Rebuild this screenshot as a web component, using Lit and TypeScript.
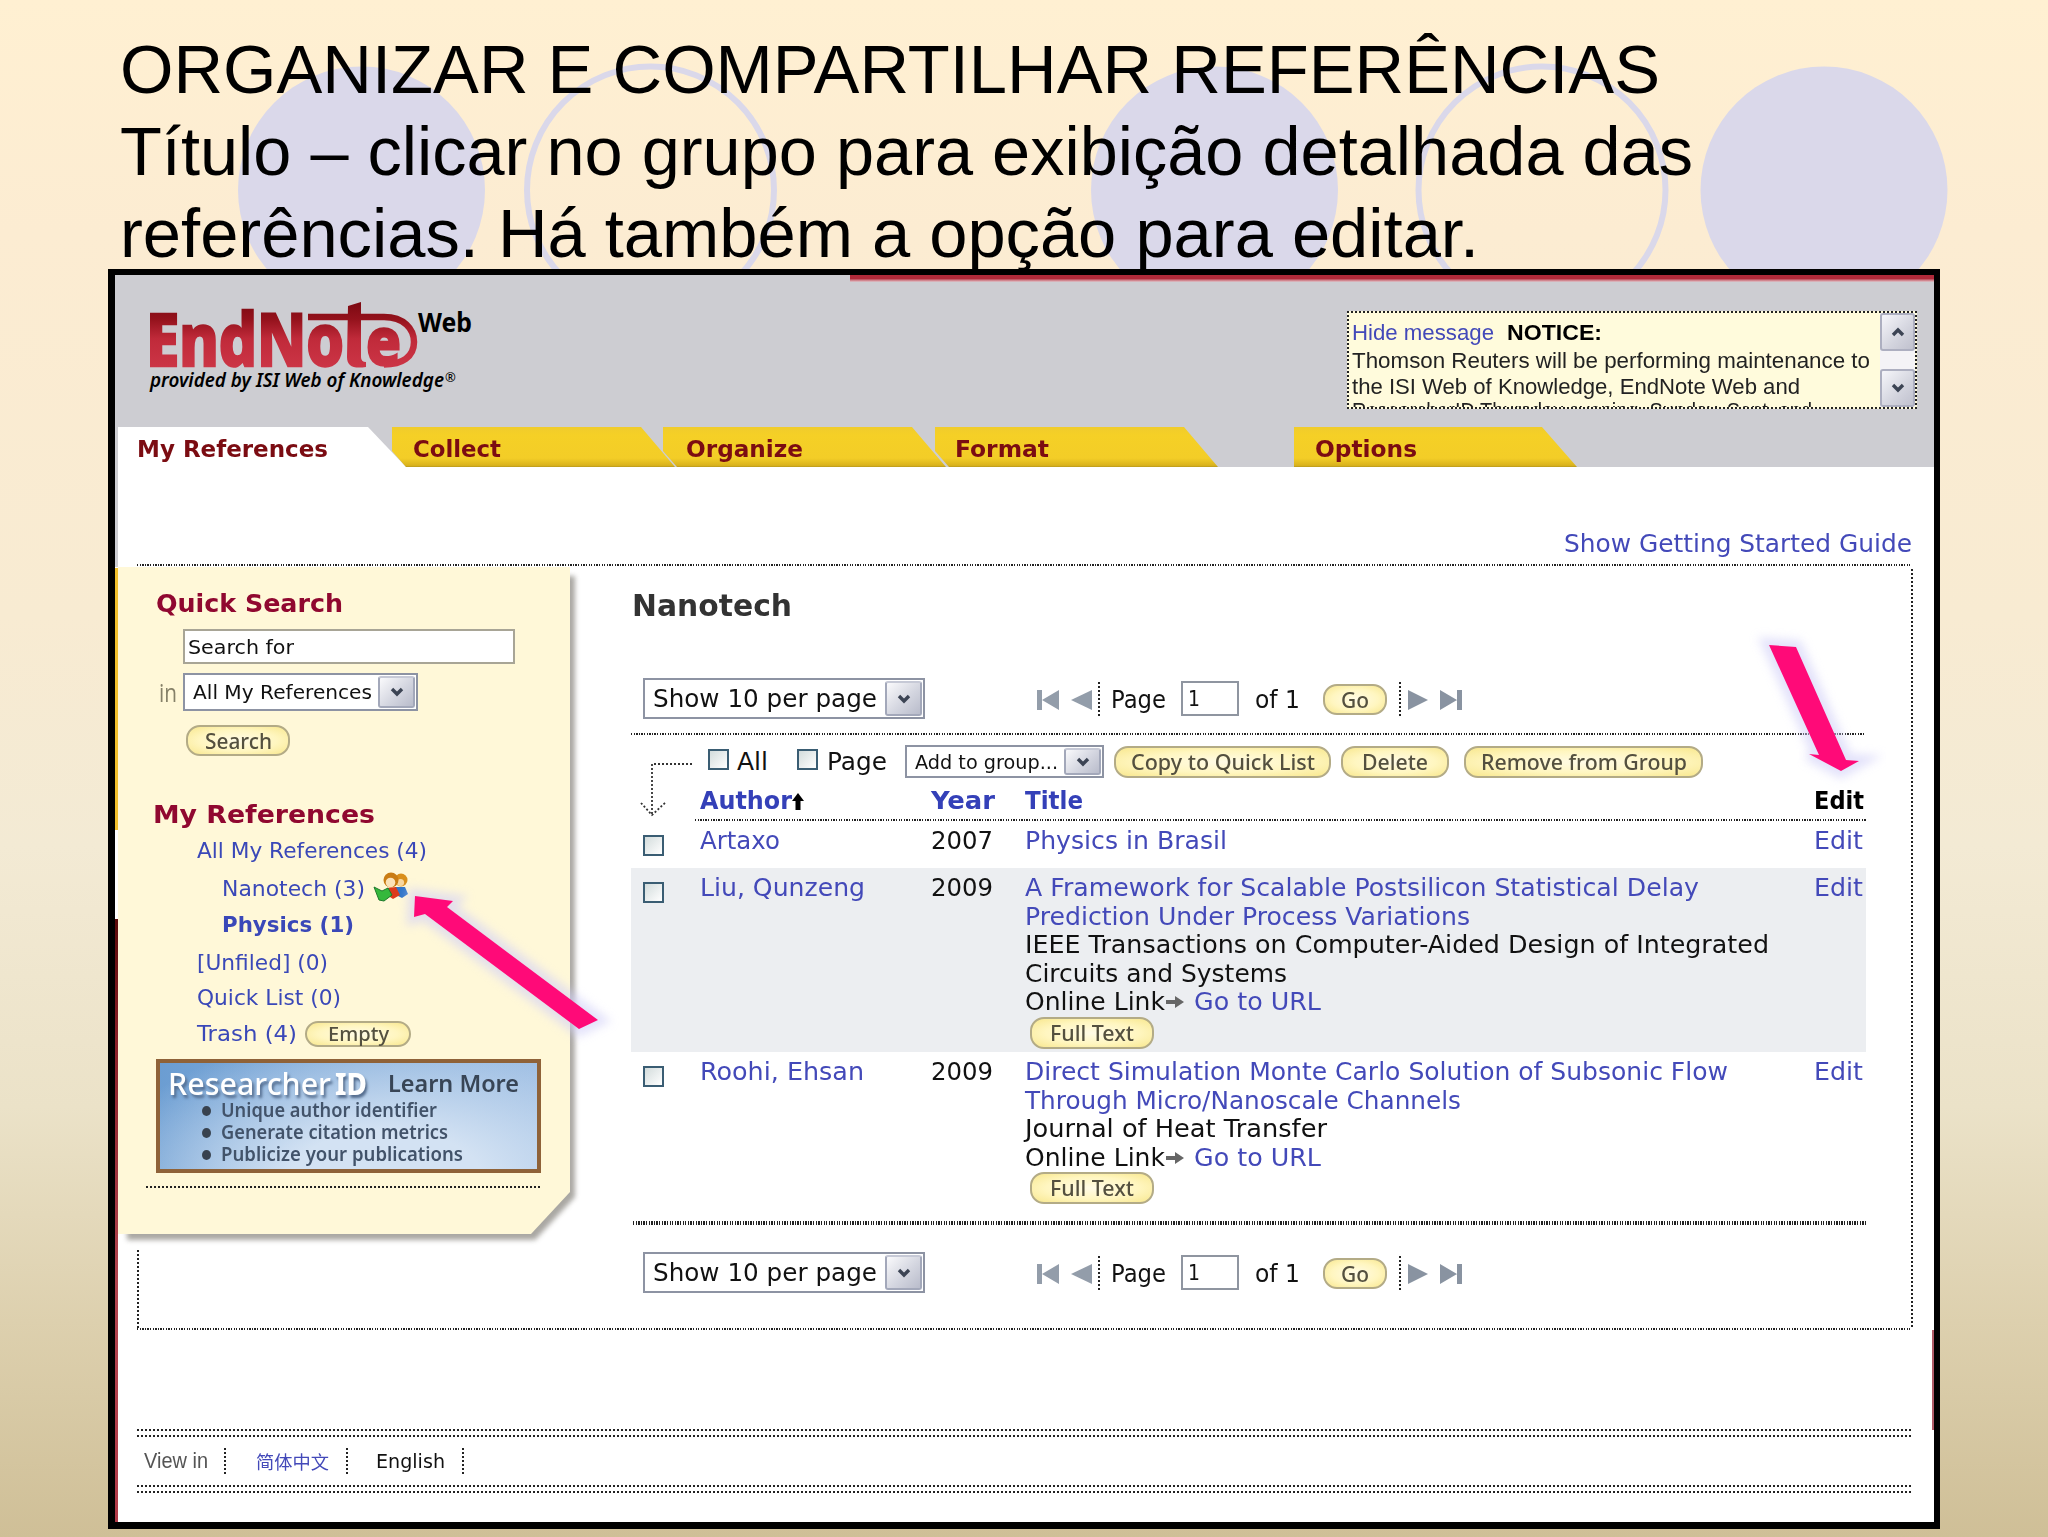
import { LitElement, html, svg, css, nothing } from "lit";
import { customElement, property, query } from "lit/decorators.js";

/** One line of text scaled horizontally to occupy exactly `w` pixels. */
@customElement("fit-text")
class FitText extends LitElement {
  static styles = css`
    :host { display: inline-block; flex: none; white-space: nowrap; text-align: left; }
    .t { display: inline-block; transform-origin: 0 50%; white-space: pre; }
  `;
  @property({ type: Number }) w = 0;
  @property() text = "";
  @query(".t") t!: HTMLElement;
  render() { return html`<span class="t">${this.text}</span>`; }
  updated() {
    this.t.style.transform = "none";
    const natural = this.t.getBoundingClientRect().width;
    this.style.width = `${this.w}px`;
    if (natural > 0) this.t.style.transform = `scaleX(${this.w / natural})`;
  }
}

const fit = (text: string, w: number, cls = "") =>
  html`<fit-text class=${cls} .text=${text} .w=${w}></fit-text>`;

@customElement("pill-button")
class PillButton extends LitElement {
  static styles = css`
    :host { display: flex; flex: none; box-sizing: border-box; align-items: center; justify-content: center;
      border: 2px solid #b3ab86; border-radius: 14px; color: #54503f;
      background: radial-gradient(ellipse at 50% 50%, #fffbe6 0%, #fff6c0 55%, #f8e78e 100%);
      font: 500 21px/26px "Noto Sans", sans-serif; }
  `;
  @property() label = "";
  @property({ type: Number }) w = 0;
  render() { return fit(this.label, this.w); }
}

const chevron = (up = false) => html`<svg width="16" height="12" viewBox="0 0 16 12">
  <path d=${up ? "M3 9 8 4l5 5" : "M3 3 8 8l5-5"} fill="none" stroke="#3c4454" stroke-width="3.400"/></svg>`;

@customElement("select-box")
class SelectBox extends LitElement {
  static styles = css`
    :host { display: flex; flex: none; box-sizing: border-box; justify-content: space-between; align-items: stretch;
      border: 2px solid #8d93a3; background: #fff; color: #111; padding: 1px; }
    .label { align-self: center; margin-left: 7px; }
    .btn { width: 37px; box-sizing: border-box; display: flex; align-items: center; justify-content: center;
      border: 2px solid #a3a8ba; border-top-color: #c6c9d6; border-radius: 3px;
      background: linear-gradient(135deg, #fafafc, #d4d6e0 55%, #b9bccb); }
  `;
  @property() label = "";
  @property({ type: Number }) w = 0;
  render() { return html`${fit(this.label, this.w, "label")}<span class="btn">${chevron()}</span>`; }
}

@customElement("page-nav")
class PageNav extends LitElement {
  static styles = css`
    :host { display: flex; height: 41px; align-items: center; padding-left: 12px;
      font: 24px/30px "DejaVu Sans", sans-serif; color: #111; }
    select-box { width: 282px; height: 41px; font-size: 25px; line-height: 32px; }
    .first { margin-left: 112px; } .prev { margin-left: 11px; }
    .sep { width: 2px; height: 34px; background: repeating-linear-gradient(#222 0 2px, #fff 2px 4px); }
    .s1 { margin-left: 6px; } .s2 { margin-left: 12px; }
    .page { margin-left: 11px; }
    .num { margin-left: 15px; width: 58px; height: 35px; box-sizing: border-box; border: 2px solid #8f95a0;
      padding-left: 5px; font-size: 21px; line-height: 33px; background: #fff; }
    .of { margin-left: 16px; }
    pill-button { margin-left: 23px; width: 64px; height: 31px; margin-top: 2px; }
    .next { margin-left: 7px; } .last { margin-left: 12px; }
    svg { flex: none; margin-top: 2px; }
    .page, .of { position: relative; top: 1px; }
  `;
  render() {
    return html`
      <select-box label="Show 10 per page" .w=${224}></select-box>
      <svg class="first" width="23" height="20"><path d="M0 0h5v20H0zM22 0v20L5 10z" fill="#939daa"/></svg>
      <svg class="prev" width="21" height="20"><path d="M21 0v20L0 10z" fill="#939daa"/></svg>
      <span class="sep s1"></span>
      ${fit("Page", 55, "page")}
      <span class="num">${fit("1", 12)}</span>
      ${fit("of 1", 45, "of")}
      <pill-button label="Go" .w=${28}></pill-button>
      <span class="sep s2"></span>
      <svg class="next" width="20" height="20"><path d="M0 0v20l20-10z" fill="#8993a1"/></svg>
      <svg class="last" width="22" height="20"><path d="M0 0v20l17-10zM17 0h5v20h-5z" fill="#8993a1"/></svg>`;
  }
}

interface Ref {
  author: [string, number]; year: string; title: [string, number][]; journal: [string, number][];
  link: boolean; size: string;
}
const REFS: Ref[] = [
  { author: ["Artaxo", 80], year: "2007", title: [["Physics in Brasil", 202]], journal: [], link: false, size: "r1" },
  { author: ["Liu, Qunzeng", 165], year: "2009",
    title: [["A Framework for Scalable Postsilicon Statistical Delay", 674], ["Prediction Under Process Variations", 445]],
    journal: [["IEEE Transactions on Computer-Aided Design of Integrated", 744], ["Circuits and Systems", 262]],
    link: true, size: "r2" },
  { author: ["Roohi, Ehsan", 164], year: "2009",
    title: [["Direct Simulation Monte Carlo Solution of Subsonic Flow", 703], ["Through Micro/Nanoscale Channels", 436]],
    journal: [["Journal of Heat Transfer", 302]], link: true, size: "r3" },
];

const TABS: [string, string, number][] = [
  ["My References", "t0", 191], ["Collect", "t1", 88], ["Organize", "t2", 117], ["Format", "t3", 94], ["Options", "t4", 102],
];

const circles = svg`
  <g fill="#dad8ea"><circle cx="361.500" cy="190" r="123.500"/><circle cx="1214.500" cy="190" r="123.500"/><circle cx="1824" cy="190" r="123.500"/></g>
  <g fill="none" stroke="#dad8ea" stroke-width="6"><circle cx="650.500" cy="190" r="123.500"/><circle cx="1542" cy="190" r="123.500"/></g>`;

@customElement("app-root")
class AppRoot extends LitElement {
  static styles = css`
    :host { display: block; font-family: "DejaVu Sans", sans-serif; }
    * { box-sizing: border-box; }
    .slide { position: relative; width: 2048px; height: 1537px; overflow: hidden;
      background: linear-gradient(#fff0d2 0%, #fcecd2 15%, #f8ebd2 40%, #f3ead4 55%, #ebe2c8 72%, #ddd0ae 86%, #cfbf97 100%); }
    .circles { position: absolute; left: 0; top: 0; }
    .heading { position: relative; height: 269px; padding: 28px 0 0 120px;
      display: flex; flex-direction: column; align-items: flex-start;
      font: 68.300px/82px "Liberation Sans", Arial, sans-serif; color: #000; }
    .frame { position: relative; margin-left: 108px; width: 1832px; height: 1260px; background: #fff;
      border: solid #000; border-width: 6px 6px 7px 7px; display: flex; flex-direction: column; }
    .head { position: relative; height: 192px; background: #cdcdd2; }
    .red { position: absolute; left: 735px; right: 0; top: 0; height: 7px; background: linear-gradient(#b02a3a 0 50%, #cf7b85 75%, #dcc5cb); }
    .banner { height: 152px; display: flex; justify-content: space-between; align-items: flex-start; }
    .logo { display: block; }
    .tabs { display: flex; padding-left: 3px; height: 40px; }
    .tab { height: 40px; font-weight: 700; font-size: 22.500px; line-height: 45px; color: #7b0c12;
      background: linear-gradient(#f0cc2c, #f5d026 20%, #f3cd27 78%, #d9b21c 96%, #b8981d); }
    .t0 { width: 288px; padding-left: 19px; background: #fff; clip-path: polygon(0 0, 250px 0, 288px 100%, 0 100%); }
    .t1, .t2, .t3 { clip-path: polygon(0 0, 249px 0, 283px 100%, 14px 100%, 0 24px); }
    .t1 { width: 283px; margin-left: -14px; padding-left: 21px; }
    .t2 { width: 284px; margin-left: -12px; padding-left: 23px; }
    .t3 { width: 284px; margin-left: -12px; padding-left: 20px; }
    .t4 { width: 283px; margin-left: 75px; padding-left: 21px; clip-path: polygon(0 0, 248px 0, 100% 100%, 0 100%); }

    .notice { margin: 36px 17px 0 0; width: 570px; height: 98px; border: 2px dotted #222; background: #fffbdc;
      display: flex; justify-content: space-between; overflow: hidden;
      font: 22px/26px "Liberation Sans", Arial, sans-serif; color: #222; }
    .msg { padding: 5px 0 0 3px; height: 94px; overflow: hidden; display: flex; flex-direction: column; }
    .msg .row { display: flex; gap: 13px; height: 30px; line-height: 29px; flex: none; }
    .msg .cut { margin-top: -2px; }
    .bold { font-weight: 700; color: #000; }
    .scroll { width: 35px; display: flex; flex-direction: column; justify-content: space-between; background: #f4f3f6; }
    .sb { height: 38px; display: flex; align-items: center; justify-content: center; border: 2px solid #adafc0; border-radius: 3px;
      background: linear-gradient(135deg, #f6f6fa, #d3d4de 60%, #c0c1ce); }
    .link { color: #4349b9; }

    .guide { height: 97px; padding: 62px 22px 0 0; display: flex; justify-content: flex-end; font-size: 25px; line-height: 30px; }
    .dots { height: 2px; background: repeating-linear-gradient(90deg, #222 0 1.300px, #fff 1.300px 2.610px); }
    .wide { background: repeating-linear-gradient(90deg, #222 0 2px, transparent 2px 4px); }
    .edge { margin: 0 22px; flex: none; }
    .content { position: relative; height: 762px; display: flex; flex: none; }
    .vr { position: absolute; width: 2px; background: repeating-linear-gradient(#222 0 2px, #fff 2px 4px); }
    .vright { left: 1796px; top: 3px; bottom: 0; } .vleft { left: 22px; top: 684px; bottom: 0; }

    .side { position: relative; width: 455px; flex: none; }
    .sidebg { position: absolute; left: 0; top: 0; }
    .sidecol { position: relative; display: flex; flex-direction: column; align-items: flex-start; }
    h2 { margin: 23px 0 0 41px; font-size: 25px; line-height: 30px; height: 30px; color: #900830; display: flex; }
    .search { margin: 10px 0 0 68px; width: 332px; height: 35px; border: 2px solid #a8a596; background: #fff; padding-left: 3px;
      font-size: 19.500px; line-height: 33px; color: #111; display: flex; }
    .inrow { margin: 9px 0 0 44px; display: flex; height: 38px; align-items: center; font: 25px/30px "Open Sans", sans-serif; color: #858068; }
    .inrow select-box { margin-left: 6px; width: 235px; height: 38px; font: 20px/26px "DejaVu Sans", sans-serif; }
    .bsearch { margin: 14px 0 0 71px; width: 104px; height: 31px; }
    .mine { margin: 44px 0 0 38px; }
    .tree { margin: 7px 0 0 82px; display: grid; grid-template-rows: 38px 36px 37.500px 35.500px 35.500px 28px; font-size: 21px; line-height: 28px; color: #3a48b8; }
    .tree div { display: flex; }
    .sub { padding-left: 25px; }
    .pbold { font-weight: 700; }
    .people { margin: -3px 0 0 8px; }
    .bempty { margin: 1px 0 0 8px; width: 106px; height: 26px; font-size: 20px; }
    .rid { margin: 11px 0 0 41px; width: 385px; height: 114px; border: 4px solid #8f6238; padding: 2px 0 0 8px;
      background: radial-gradient(ellipse at 60% 110%, #d3e2f3 30%, transparent 90%), linear-gradient(100deg, #6b9dd2, #9fbfe4);
      font-family: "Noto Sans", sans-serif; color: #42536a; font-weight: 600; }
    .ridtop { display: flex; height: 36px; align-items: center; line-height: 36px; }
    .brand { font-size: 31px; font-weight: 500; color: #fff; text-shadow: 2px 3px 3px #51698a; }
    .id { font-size: 31px; font-weight: 800; color: #fff; margin-left: 4px; text-shadow: 2px 3px 3px #51698a; }
    .learn { font-size: 24px; margin-left: 21px; color: #384556; }
    .rid ul { list-style: none; margin: -1px 0 0; padding: 0 0 0 34px; font-size: 20px; line-height: 22px; }
    .rid li { display: flex; align-items: center; gap: 10px; height: 21.800px; }
    .rid li::before { content: ""; width: 9px; height: 10px; border-radius: 50%; background: #38424f; margin-top: 2px; }
    .sdots { margin: 13px 0 0 31px; width: 395px; }

    .main { margin-left: 61px; width: 1235px; display: flex; flex-direction: column; position: relative; font-size: 25px; }
    h1 { margin: 21px 0 0 1px; font-size: 31px; line-height: 36px; height: 36px; color: #333; display: flex; }
    .p1 { margin-top: 55px; } .d1 { margin-top: 14px; }
    .elbow { position: absolute; left: 8px; top: 196px; }
    .tools { margin-top: 10px; height: 33px; display: flex; align-items: center; padding-left: 77px; line-height: 28px; color: #111; }
    .check { flex: none; width: 21px; height: 21px; border: 2px solid #3a5d73; background: linear-gradient(135deg, #d3dcdc, #fff); margin-top: -4px; }
    .la { margin-left: 8px; } .c2 { margin-left: 29px; } .lp { margin-left: 9px; }
    .tools select-box { margin-left: 18px; width: 199px; height: 33px; font-size: 20px; }
    .b1 { margin-left: 10px; width: 217px; height: 32px; } .b2 { margin-left: 10px; width: 108px; height: 32px; } .b3 { margin-left: 15px; width: 239px; height: 32px; }
    .cols { display: grid; grid-template-columns: 68.500px 231px 94.500px 789px 52px; }
    .hdr { margin-top: 8px; height: 30px; line-height: 30px; font-weight: 700; color: #3440b8; }
    .hdr > span { display: flex; }
    .hdr svg { margin: 7px 0 0 0; }
    .black { color: #000; }
    .d2 { margin: 3px 0 0 64px; }
    .rec { padding-top: 6px; line-height: 28.600px; color: #111; }
    .r1 { height: 47px; } .r2 { height: 184px; background: #eceef1; } .r3 { height: 169px; }
    .rec .check { margin: 8px 0 0 12px; }
    .stack { display: flex; flex-direction: column; align-items: flex-start; }
    .stack > * { flex: none; }
    .online { display: flex; }
    .online svg { margin: 7px 10px 0 1px; }
    .full { margin: 0 0 0 5px; width: 124px; height: 32px; }
    .d3 { height: 4px; margin: 0 0 0 2px; }
    .p2 { margin-top: 27px; }
    .foot1 { margin-top: 99px; } .gap { margin-top: 4px; }
    .lang { height: 48px; flex: none; display: flex; align-items: center; padding-left: 29px; font: 21.500px/48px "Liberation Sans", Arial, sans-serif; color: #555; }
    .lang i { width: 2px; height: 26px; background: repeating-linear-gradient(#222 0 2px, #fff 2px 4px); }
    .zh { font-family: "Noto Sans CJK SC", sans-serif; font-size: 18.500px; margin: 0 17px 0 30px; }
    .en { font-family: "DejaVu Sans", sans-serif; font-size: 20px; color: #111; margin: 0 17px 0 28px; }
    .i1 { margin-left: 16px; }
    .strip { position: absolute; left: 0; width: 3px; }
    .grey { top: 152px; height: 140px; background: #cdcdd2; }
    .gold { top: 293px; height: 262px; background: #f2c02c; }
    .wine { top: 644px; bottom: 0; background: linear-gradient(#5a0a0a, #8a2028 20%, #b0444f 60%, #b03a48); }
    .rwine { left: auto; right: 0; top: 1055px; height: 100px; background: #b05a66; width: 2px; }
    .arrows { position: absolute; left: 0; top: 0; }
  `;

  render() {
    return html`
    <div class="slide">
      <svg class="circles" width="2048" height="330">${circles}</svg>
      <div class="heading">
        ${fit("ORGANIZAR E COMPARTILHAR REFERÊNCIAS", 1540)}
        ${fit("Título – clicar no grupo para exibição detalhada das", 1573)}
        ${fit("referências. Há também a opção para editar.", 1359)}
      </div>
      <div class="frame">
        <div class="head">
          <div class="red"></div>
          <div class="banner">${this.logo()}${this.notice()}</div>
          <div class="tabs">${TABS.map(([n, c, w]) => html`<div class="tab ${c}">${fit(n, w)}</div>`)}</div>
        </div>
        <div class="guide link">${fit("Show Getting Started Guide", 348)}</div>
        <div class="dots edge"></div>
        <div class="content">
          ${this.sidebar()}${this.main()}
          <div class="vr vleft"></div><div class="vr vright"></div>
        </div>
        <div class="dots edge"></div>
        <div class="dots wide edge foot1"></div><div class="dots wide edge gap"></div>
        <div class="lang">
          ${fit("View in", 64)}<i class="i1"></i>
          ${fit("简体中文", 73, "zh link")}<i></i>
          ${fit("English", 69, "en")}<i></i>
        </div>
        <div class="dots wide edge"></div><div class="dots wide edge gap"></div>
        <div class="strip grey"></div><div class="strip gold"></div><div class="strip wine"></div><div class="strip rwine"></div>
      </div>
      <svg class="arrows" width="2048" height="1100">
        <defs><filter id="glow" x="-30%" y="-30%" width="160%" height="160%"><feGaussianBlur stdDeviation="5"/></filter></defs>
        ${["415,896 453,901 447,907 598,1020 579,1029 425,914 414,917",
           "1769,645 1796,647 1846,760 1859,761 1841,771 1809,754 1819,755"].map(p => svg`
          <polygon points=${p} fill="#c9c6f4" stroke="#d2d0f8" stroke-width="14" opacity=".6" filter="url(#glow)"/>
          <polygon points=${p} fill="#ff0a78"/>`)}
      </svg>
    </div>`;
  }

  logo() {
    return html`<svg class="logo" width="370" height="152" viewBox="115 275 370 152">
      <defs><linearGradient id="lg" gradientUnits="userSpaceOnUse" x1="0" y1="303" x2="0" y2="368">
        <stop offset="0" stop-color="#7d0a12"/><stop offset=".25" stop-color="#94121c"/><stop offset=".55" stop-color="#c02a3a"/><stop offset="1" stop-color="#cc3546"/></linearGradient></defs>
      <g fill="url(#lg)" stroke="url(#lg)" stroke-width="2.500" font-family="Noto Sans, sans-serif" font-weight="800" font-size="73">
        <text x="146" y="366" textLength="198" lengthAdjust="spacingAndGlyphs">EndNo</text>
        <text x="366" y="365" font-size="66" textLength="35" lengthAdjust="spacingAndGlyphs">e</text>
      </g>
      <path d="M308 317H384C404 317 414 329 414 342C414 357 402 364.500 384 364.500" fill="none" stroke="url(#lg)" stroke-width="6.500"/>
      <path d="M348 306l13-4v55q0 5 5 5v5c-13 2-19-1-19-10z" fill="url(#lg)"/>
      <text x="418" y="332" font-family="Noto Sans, sans-serif" font-weight="700" font-size="26" textLength="54" lengthAdjust="spacingAndGlyphs">Web</text>
      <text x="150" y="387" font-family="Noto Sans, sans-serif" font-style="italic" font-weight="600" font-size="20" textLength="294" lengthAdjust="spacingAndGlyphs">provided by ISI Web of Knowledge</text>
      <text x="445" y="382" font-family="Noto Sans, sans-serif" font-size="13">®</text>
    </svg>`;
  }

  notice() {
    return html`<div class="notice">
      <div class="msg">
        <div class="row">${fit("Hide message", 142, "link")}${fit("NOTICE:", 95, "bold")}</div>
        ${fit("Thomson Reuters will be performing maintenance to", 518)}
        ${fit("the ISI Web of Knowledge, EndNote Web and", 448)}
        ${fit("ResearcherID Thursday evening, Sunday, Sept. and", 460, "cut")}
      </div>
      <div class="scroll"><span class="sb">${chevron(true)}</span><span class="sb">${chevron()}</span></div>
    </div>`;
  }

  sidebar() {
    return html`<div class="side">
      <svg class="sidebg" width="475" height="700">
        <defs><filter id="sh" x="-5%" y="-5%" width="110%" height="110%"><feGaussianBlur stdDeviation="2.500"/></filter></defs>
        <path d="M12 10H460V631L420 674H12Z" fill="#8d8a84" opacity=".75" filter="url(#sh)"/>
        <path d="M3 1H455V626L416 668H3Z" fill="#fff8d8"/>
      </svg>
      <div class="sidecol">
        <h2>${fit("Quick Search", 187)}</h2>
        <div class="search">${fit("Search for", 106)}</div>
        <div class="inrow">${fit("in", 18)}<select-box label="All My References" .w=${179}></select-box></div>
        <pill-button class="bsearch" label="Search" .w=${67}></pill-button>
        <h2 class="mine">${fit("My References", 222)}</h2>
        <div class="tree">
          <div>${fit("All My References (4)", 230)}</div>
          <div class="sub">${fit("Nanotech (3)", 143)}
            <svg class="people" width="36" height="30" viewBox="0 0 36 30">
              <circle cx="28" cy="8" r="6.500" fill="#d98f1c"/><circle cx="27.500" cy="10.500" r="3.600" fill="#f8d8a0"/>
              <path d="M22 15h10l3 7-6 4-8-4z" fill="#2f74c8"/>
              <circle cx="18" cy="8" r="7.500" fill="#c97c14"/><circle cx="17.500" cy="10.500" r="4.800" fill="#fbe2b8"/>
              <path d="M14 16l9-1 4 8-7 4-6-4z" fill="#dc3a1c"/>
              <path d="M1 15l8 4 6-3 4 7-8 6-5-1z" fill="#35b83c" stroke="#1f7a2c"/>
            </svg></div>
          <div class="sub">${fit("Physics (1)", 132, "pbold")}</div>
          <div>${fit("[Unfiled] (0)", 131)}</div>
          <div>${fit("Quick List (0)", 144)}</div>
          <div>${fit("Trash (4)", 100)}<pill-button class="bempty" label="Empty" .w=${61}></pill-button></div>
        </div>
        <div class="rid">
          <div class="ridtop">${fit("Researcher", 163, "brand")}${fit("ID", 32, "id")}${fit("Learn More", 131, "learn")}</div>
          <ul>
            <li>${fit("Unique author identifier", 216)}</li>
            <li>${fit("Generate citation metrics", 227)}</li>
            <li>${fit("Publicize your publications", 242)}</li>
          </ul>
        </div>
        <div class="dots wide sdots"></div>
      </div>
    </div>`;
  }

  main() {
    return html`<div class="main">
      <h1>${fit("Nanotech", 160)}</h1>
      <page-nav class="p1"></page-nav>
      <div class="dots d1"></div>
      <div class="tools">
        <span class="check"></span>${fit("All", 31, "la")}
        <span class="check c2"></span>${fit("Page", 60, "lp")}
        <select-box label="Add to group..." .w=${143}></select-box>
        <pill-button class="b1" label="Copy to Quick List" .w=${184}></pill-button>
        <pill-button class="b2" label="Delete" .w=${66}></pill-button>
        <pill-button class="b3" label="Remove from Group" .w=${206}></pill-button>
      </div>
      <svg class="elbow" width="56" height="60"><path d="M53 2H13V54M2 41L13 53L27 40" fill="none" stroke="#333" stroke-width="1.800" stroke-dasharray="2 2"/></svg>
      <div class="cols hdr">
        <span></span>
        <span>${fit("Author", 92)}<svg width="12" height="17"><path d="M6 0l6 8H8.500v9h-5V8H0z" fill="#000"/></svg></span>
        <span>${fit("Year", 64)}</span><span>${fit("Title", 58)}</span><span class="black">${fit("Edit", 50)}</span>
      </div>
      <div class="dots d2"></div>
      ${REFS.map(r => html`<div class="cols rec ${r.size}">
        <span class="check"></span>
        <span class="link">${fit(r.author[0], r.author[1])}</span>
        <span>${fit(r.year, 62)}</span>
        <div class="stack">
          ${r.title.map(([t, w]) => fit(t, w, "link"))}
          ${r.journal.map(([t, w]) => fit(t, w))}
          ${r.link ? html`<div class="online">${fit("Online Link", 140)}
            <svg width="18" height="14"><path d="M0 5h9V1l9 6-9 6V9H0z" fill="#666"/></svg>${fit("Go to URL", 127, "link")}</div>
            <pill-button class="full" label="Full Text" .w=${84}></pill-button>` : nothing}
        </div>
        <span class="link">${fit("Edit", 49)}</span>
      </div>`)}
      <div class="dots d3"></div>
      <page-nav class="p2"></page-nav>
    </div>`;
  }
}
